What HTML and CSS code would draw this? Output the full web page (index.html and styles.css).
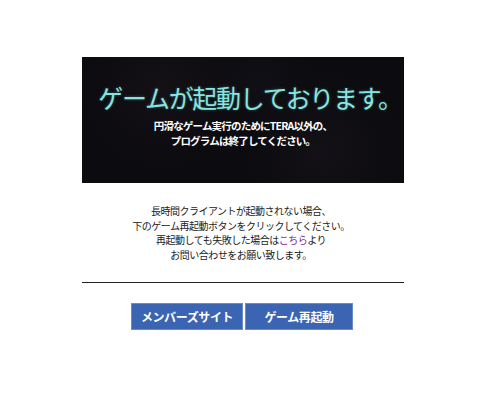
FILE: index.html
```html
<!DOCTYPE html>
<html lang="ja">
<head>
<meta charset="utf-8">
<title>TERA</title>
<link rel="stylesheet" href="styles.css">
</head>
<body>
<div class="page">
  <div class="banner">
    <h1 class="banner-title">ゲームが起動しております。</h1>
    <p class="banner-sub">円滑なゲーム実行のためにTERA以外の、<br>プログラムは終了してください。</p>
  </div>
  <div class="notice">
    <p>長時間クライアントが起動されない場合、<br>下のゲーム再起動ボタンをクリックしてください。<br>再起動しても失敗した場合は<a class="link" href="#">こちら</a>より<br>お問い合わせをお願い致します。</p>
  </div>
  <hr class="rule">
  <div class="actions">
    <a class="btn btn-member" href="#">メンバーズサイト</a>
    <a class="btn btn-restart" href="#">ゲーム再起動</a>
  </div>
</div>
</body>
</html>
```

FILE: styles.css
```css
html, body {
  margin: 0;
  padding: 0;
  background: #ffffff;
}
body {
  font-family: "Noto Sans CJK JP", "Noto Sans", sans-serif;
  color: #222222;
}
.page {
  width: 322px;
  margin: 57px 0 0 82px;
  display: flex;
  flex-direction: column;
}
.banner {
  height: 126px;
  box-sizing: border-box;
  background:
    radial-gradient(circle at 25% 25%, rgba(45,35,40,0.25) 0, rgba(0,0,0,0) 30%),
    radial-gradient(circle at 75% 75%, rgba(40,35,45,0.25) 0, rgba(0,0,0,0) 30%),
    radial-gradient(circle at 55% 20%, rgba(30,30,45,0.25) 0, rgba(0,0,0,0) 25%),
    #0c0b0f;
  display: flex;
  flex-direction: column;
  align-items: center;
  padding-top: 22px;
}
.banner-title {
  margin: 0 0 0 14px;
  font-size: 25px;
  line-height: 36px;
  font-weight: 400;
  letter-spacing: -1.3px;
  color: #88e4e0;
  text-shadow: 0 0 3px rgba(120, 230, 225, 0.35);
}
.banner-sub {
  margin: 4px 0 0 0;
  font-size: 10.5px;
  line-height: 14.5px;
  font-weight: 700;
  color: #ffffff;
  text-align: center;
  letter-spacing: -0.8px;
}
.notice {
  margin-top: 21px;
  display: flex;
  justify-content: center;
}
.notice p {
  margin: 0 4px 0 0;
  font-size: 10px;
  line-height: 14.5px;
  letter-spacing: -0.5px;
  text-align: center;
  color: #222222;
}
.link {
  color: #8a2c9a;
  text-decoration: none;
}
.rule {
  margin: 20px 0 0 0;
  border: 0;
  height: 1px;
  background: #222222;
}
.actions {
  margin-top: 20px;
  display: flex;
  justify-content: center;
  gap: 2px;
  padding-right: 2px;
}
.btn {
  height: 27px;
  box-sizing: border-box;
  display: flex;
  align-items: center;
  justify-content: center;
  background: #3b64b2;
  border: 1px solid #6a8ccc;
  color: #ffffff;
  font-size: 12px;
  font-weight: 700;
  letter-spacing: -0.4px;
  text-decoration: none;
}
.btn-member {
  width: 112px;
}
.btn-restart {
  width: 108px;
}
```
